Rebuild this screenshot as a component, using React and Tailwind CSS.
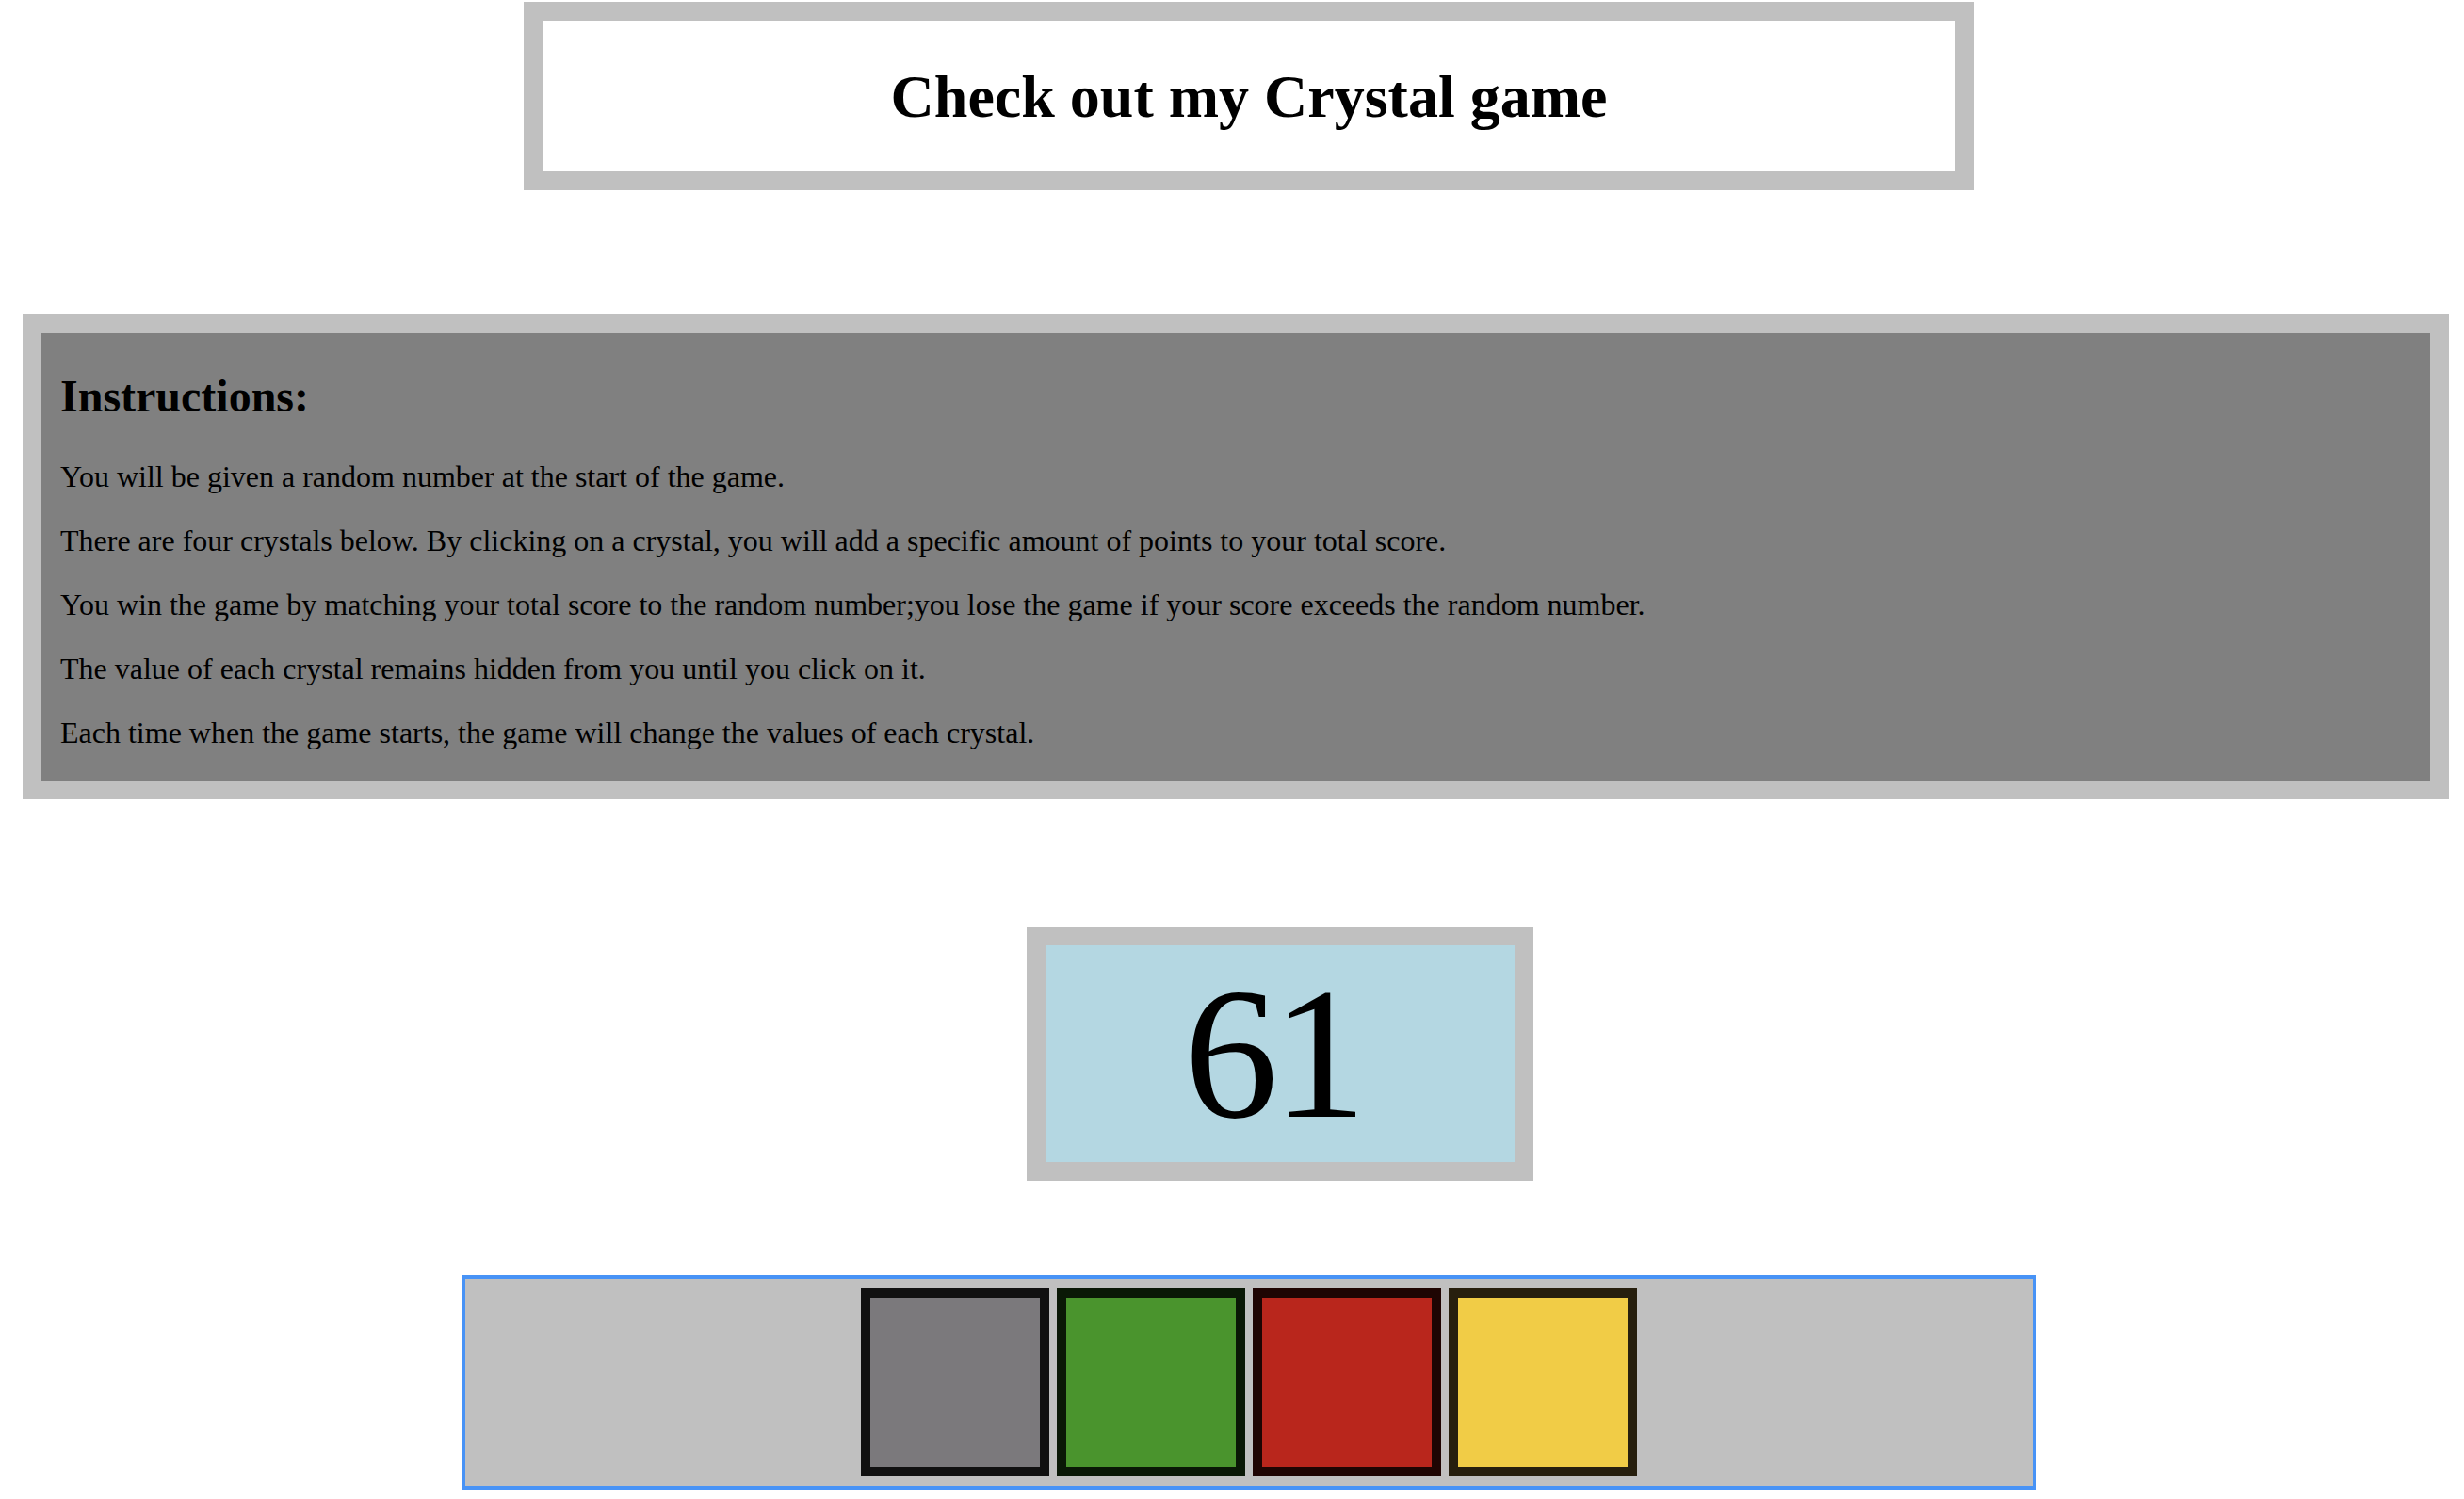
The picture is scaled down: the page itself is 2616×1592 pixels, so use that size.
export default function App() {
  const crystals = [
    { inner: "bg-[#7b797c]", border: "border-[#111111]" },
    { inner: "bg-[#4a942d]", border: "border-[#0a1806]" },
    { inner: "bg-[#b9261c]", border: "border-[#1f0503]" },
    { inner: "bg-[#f1cc46]", border: "border-[#271f0e]" },
  ];
  return (
    <div
      className="w-[2616px] h-[1592px] bg-white text-black overflow-hidden flex flex-col"
      style={{ fontFamily: '"Liberation Serif", "Times New Roman", serif' }}
    >
      <div className="mt-[2px] ml-[556px] w-[1540px] h-[200px] border-[20px] border-[#c0c0c0] bg-white flex items-center justify-center">
        <h1 className="text-[64px] font-bold leading-[73px] m-0">Check out my Crystal game</h1>
      </div>

      <div className="mt-[132px] ml-[24px] w-[2576px] h-[515px] border-[20px] border-[#c0c0c0] bg-[#808080] px-[20px] flex flex-col">
        <h2 className="mt-[39px] text-[48px] font-bold leading-[55px]">Instructions:</h2>
        <div className="mt-[40px] flex flex-col gap-[32px] text-[32px] leading-[36px]">
          <p>You will be given a random number at the start of the game.</p>
          <p>There are four crystals below. By clicking on a crystal, you will add a specific amount of points to your total score.</p>
          <p>You win the game by matching your total score to the random number;you lose the game if your score exceeds the random number.</p>
          <p>The value of each crystal remains hidden from you until you click on it.</p>
          <p>Each time when the game starts, the game will change the values of each crystal.</p>
        </div>
      </div>

      <div className="mt-[135px] ml-[1090px] w-[538px] h-[270px] border-[20px] border-[#c0c0c0] bg-[#b4d7e2] flex justify-center">
        <span className="text-[200px] leading-[230px] tracking-[-6px] mr-[16px]">61</span>
      </div>

      <div className="mt-[100px] ml-[490px] w-[1672px] h-[228px] border-[4px] border-[#4893f6] bg-[#c0c0c0] flex justify-center items-center gap-[8px]">
        {crystals.map((c, i) => (
          <div key={i} className={`w-[200px] h-[200px] border-[10px] ${c.border} ${c.inner}`} />
        ))}
      </div>
    </div>
  );
}
